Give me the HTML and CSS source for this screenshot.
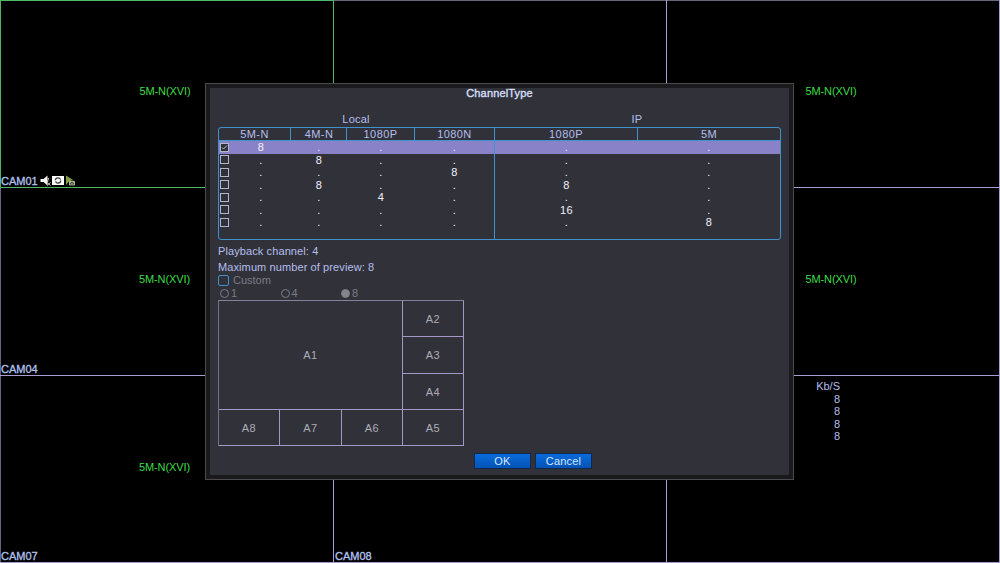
FILE: index.html
```html
<!DOCTYPE html>
<html lang="en">
<head>
  <meta charset="UTF-8">
  <title>ChannelType</title>
  <link rel="stylesheet" href="styles.css">
</head>
<body>
  <div class="wall">
    <div class="cam active">
      <span class="signal">5M-N(XVI)</span>
      <div class="cam-label">
        <span>CAM01</span>
        <svg class="icons" width="36" height="11" viewBox="0 0 36 11">
          <path d="M0.5 4h3l4-3.500v10l-4-3.500h-3z" fill="#f4f4f4"/>
          <path d="M8.500 3l-1 4M7 7.500l3.500 3M10.500 7.500l-3.500 3" stroke="#e0c4c4" fill="none"/>
          <rect x="12" y="1" width="12" height="9" fill="#fff"/>
          <circle cx="18" cy="5.500" r="2.700" fill="none" stroke="#333" stroke-width="1.200" stroke-dasharray="7.200 1.280"/>
          <path d="M26 0.500l8 5h-3v1h-2l-3 3.500z" fill="#7f9a48"/>
          <path d="M29.500 6.500h5v3.500h-5zM29.500 6.500l2.500 2 2.500-2" fill="#46522c" stroke="#d0d4b0" stroke-width=".8"/>
        </svg>
      </div>
    </div>
    <div class="cam"></div>
    <div class="cam"><span class="signal">5M-N(XVI)</span></div>

    <div class="cam">
      <span class="signal">5M-N(XVI)</span>
      <div class="cam-label">CAM04</div>
    </div>
    <div class="cam"></div>
    <div class="cam"><span class="signal">5M-N(XVI)</span></div>

    <div class="cam">
      <span class="signal">5M-N(XVI)</span>
      <div class="cam-label">CAM07</div>
    </div>
    <div class="cam"><div class="cam-label">CAM08</div></div>
    <div class="cam">
      <div class="rate">
        <div>Kb/S</div>
        <div>8</div>
        <div>8</div>
        <div>8</div>
        <div>8</div>
      </div>
    </div>
  </div>

  <div class="dialog">
    <div class="title">ChannelType</div>

    <div class="groups">
      <div>Local</div>
      <div>IP</div>
    </div>

    <div class="table">
      <div class="row head">
        <div class="first">5M-N</div><div>4M-N</div><div>1080P</div><div>1080N</div><div>1080P</div><div>5M</div>
      </div>
      <div class="row selected">
        <div><i class="check"><svg width="7" height="7" viewBox="0 0 7 7"><path d="M1 3.500l1.500 1.500L6 1.500" fill="none" stroke="#c4c4dc"/></svg></i></div>
        <div>8</div><div>.</div><div>.</div><div>.</div><div>.</div><div>.</div>
      </div>
      <div class="row">
        <div><i class="check"></i></div>
        <div>.</div><div>8</div><div>.</div><div>.</div><div>.</div><div>.</div>
      </div>
      <div class="row">
        <div><i class="check"></i></div>
        <div>.</div><div>.</div><div>.</div><div>8</div><div>.</div><div>.</div>
      </div>
      <div class="row">
        <div><i class="check"></i></div>
        <div>.</div><div>8</div><div>.</div><div>.</div><div>8</div><div>.</div>
      </div>
      <div class="row">
        <div><i class="check"></i></div>
        <div>.</div><div>.</div><div>4</div><div>.</div><div>.</div><div>.</div>
      </div>
      <div class="row">
        <div><i class="check"></i></div>
        <div>.</div><div>.</div><div>.</div><div>.</div><div>16</div><div>.</div>
      </div>
      <div class="row">
        <div><i class="check"></i></div>
        <div>.</div><div>.</div><div>.</div><div>.</div><div>.</div><div>8</div>
      </div>
      <div class="row filler">
        <div></div><div></div><div></div><div></div><div></div><div></div><div></div>
      </div>
    </div>

    <div class="info playback">Playback channel: 4</div>
    <div class="info preview">Maximum number of preview: 8</div>

    <div class="custom"><i class="box"></i>Custom</div>
    <div class="radios">
      <div><i class="radio"></i>1</div>
      <div><i class="radio"></i>4</div>
      <div><i class="radio on"></i>8</div>
    </div>

    <div class="layout">
      <div class="big">A1</div>
      <div>A2</div>
      <div>A3</div>
      <div>A4</div>
      <div>A8</div>
      <div>A7</div>
      <div>A6</div>
      <div>A5</div>
    </div>

    <div class="buttons">
      <button>OK</button>
      <button>Cancel</button>
    </div>
  </div>
</body>
</html>
```
FILE: styles.css
```css
* {
  box-sizing: border-box;
}

body {
  margin: 0;
  width: 1000px;
  height: 563px;
  overflow: hidden;
  position: relative;
  background: #000;
  color: #b4bfec;
  font-family: "Liberation Sans", Arial, sans-serif;
  font-size: 11px;
  letter-spacing: 0.4px;
}

/* camera wall */
.wall {
  display: grid;
  grid-template-columns: 334px 333px 333px;
  grid-template-rows: 188px 188px 187px;
  height: 563px;
  box-shadow: inset 1px 1px #66667a;
}

.cam {
  display: flex;
  flex-direction: column;
  border-right: 1px solid #a99cd0;
  border-bottom: 1px solid #a99cd0;
}

.cam.active {
  border: 1px solid #4fb866;
}

.signal {
  align-self: center;
  margin-top: 84px;
  padding-right: 4px;
  line-height: 14px;
  color: #3fdc48;
  letter-spacing: -0.1px;
}

.cam.active .signal {
  margin-top: 83px;
}

.cam-label {
  display: flex;
  align-items: center;
  margin-top: auto;
  height: 13px;
  padding-left: 1px;
  color: #b4c2f2;
  -webkit-text-stroke: 0.3px #b4c2f2;
  letter-spacing: 0;
}

.cam.active .cam-label {
  padding-left: 0;
}

.icons {
  margin-left: 2px;
}

.rate {
  width: 173px;
  padding-top: 4px;
  text-align: right;
  line-height: 12.6px;
  letter-spacing: 0;
}

/* dialog */
.dialog {
  position: absolute;
  left: 205px;
  top: 83px;
  width: 589px;
  height: 397px;
  border: 1px solid #4a4a4c;
  background: #31313a;
  box-shadow: inset 0 0 0 4px #1a1a1c;
  padding: 4px 12px 0;
}

.title {
  height: 25px;
  line-height: 11px;
  text-align: center;
  letter-spacing: 0.15px;
  color: #d3dcf5;
  -webkit-text-stroke: 0.4px #d3dcf5;
}

.groups {
  display: grid;
  grid-template-columns: 276px 286px;
  height: 14px;
  line-height: 13px;
  text-align: center;
  letter-spacing: 0.2px;
}

.table {
  display: flex;
  flex-direction: column;
  width: 563px;
  height: 113px;
  border: 1px solid #3f92cb;
  border-radius: 3px;
}

.row {
  display: grid;
  grid-template-columns: 11px 61px 56px 68px 80px 143px 142px;
  height: 12.5px;
  line-height: 13px;
  text-align: center;
  color: #f2f2f8;
}

.row > div:nth-child(2) {
  padding-left: 1px;
}

.row > div:nth-child(5) {
  border-right: 1px solid #3f92cb;
}

.head {
  height: 13px;
  line-height: 12px;
  color: #b4bfec;
  border-bottom: 1px solid #3f92cb;
}

.head .first {
  grid-column: span 2;
}

.head > div:not(:last-child) {
  border-right: 1px solid #3f92cb;
}

.selected {
  background: #8982c9;
}

.filler {
  flex: 1;
  height: auto;
}

.check {
  display: block;
  width: 9px;
  height: 9px;
  margin: 1.5px 0 0 1px;
  border: 1px solid #b4b4cc;
  background: #30303a;
}

.check svg {
  display: block;
}

.info {
  line-height: 16px;
  letter-spacing: 0.1px;
}

.playback {
  margin-top: 3px;
}

.preview {
  height: 15px;
}

.custom {
  display: flex;
  align-items: center;
  height: 12px;
  letter-spacing: 0;
  color: #7c7c84;
}

.box {
  width: 11px;
  height: 11px;
  margin-right: 4px;
  border: 1px solid #3f92cb;
  border-radius: 2px;
}

.radios {
  display: flex;
  height: 14px;
  padding-left: 2px;
  color: #7c7c84;
}

.radios div {
  display: flex;
  align-items: center;
  width: 60.5px;
}

.radio {
  width: 9px;
  height: 9px;
  margin-right: 2px;
  border: 1px solid #7c7c84;
  border-radius: 50%;
}

.radio.on {
  background: #85858b;
}

.layout {
  display: grid;
  grid-template-columns: 61px 62px 61px 61px;
  grid-template-rows: 36px 37px 36px 36px;
  width: 246px;
  border-top: 1px solid #85809c;
  border-left: 1px solid #726e88;
  color: #acacb6;
}

.layout div {
  display: flex;
  align-items: center;
  justify-content: center;
  border-right: 1px solid #a498c6;
  border-bottom: 1px solid #a498c6;
}

.layout .big {
  grid-column: span 3;
  grid-row: span 3;
}

.buttons {
  display: flex;
  gap: 4px;
  margin-top: 7px;
  padding-left: 256px;
}

button {
  width: 57px;
  height: 16px;
  padding: 0;
  border: 1px solid #10284c;
  background: linear-gradient(#0a6bdc, #0453b4);
  color: #d5e9ff;
  font: inherit;
  letter-spacing: 0.2px;
  line-height: 13px;
}
```
